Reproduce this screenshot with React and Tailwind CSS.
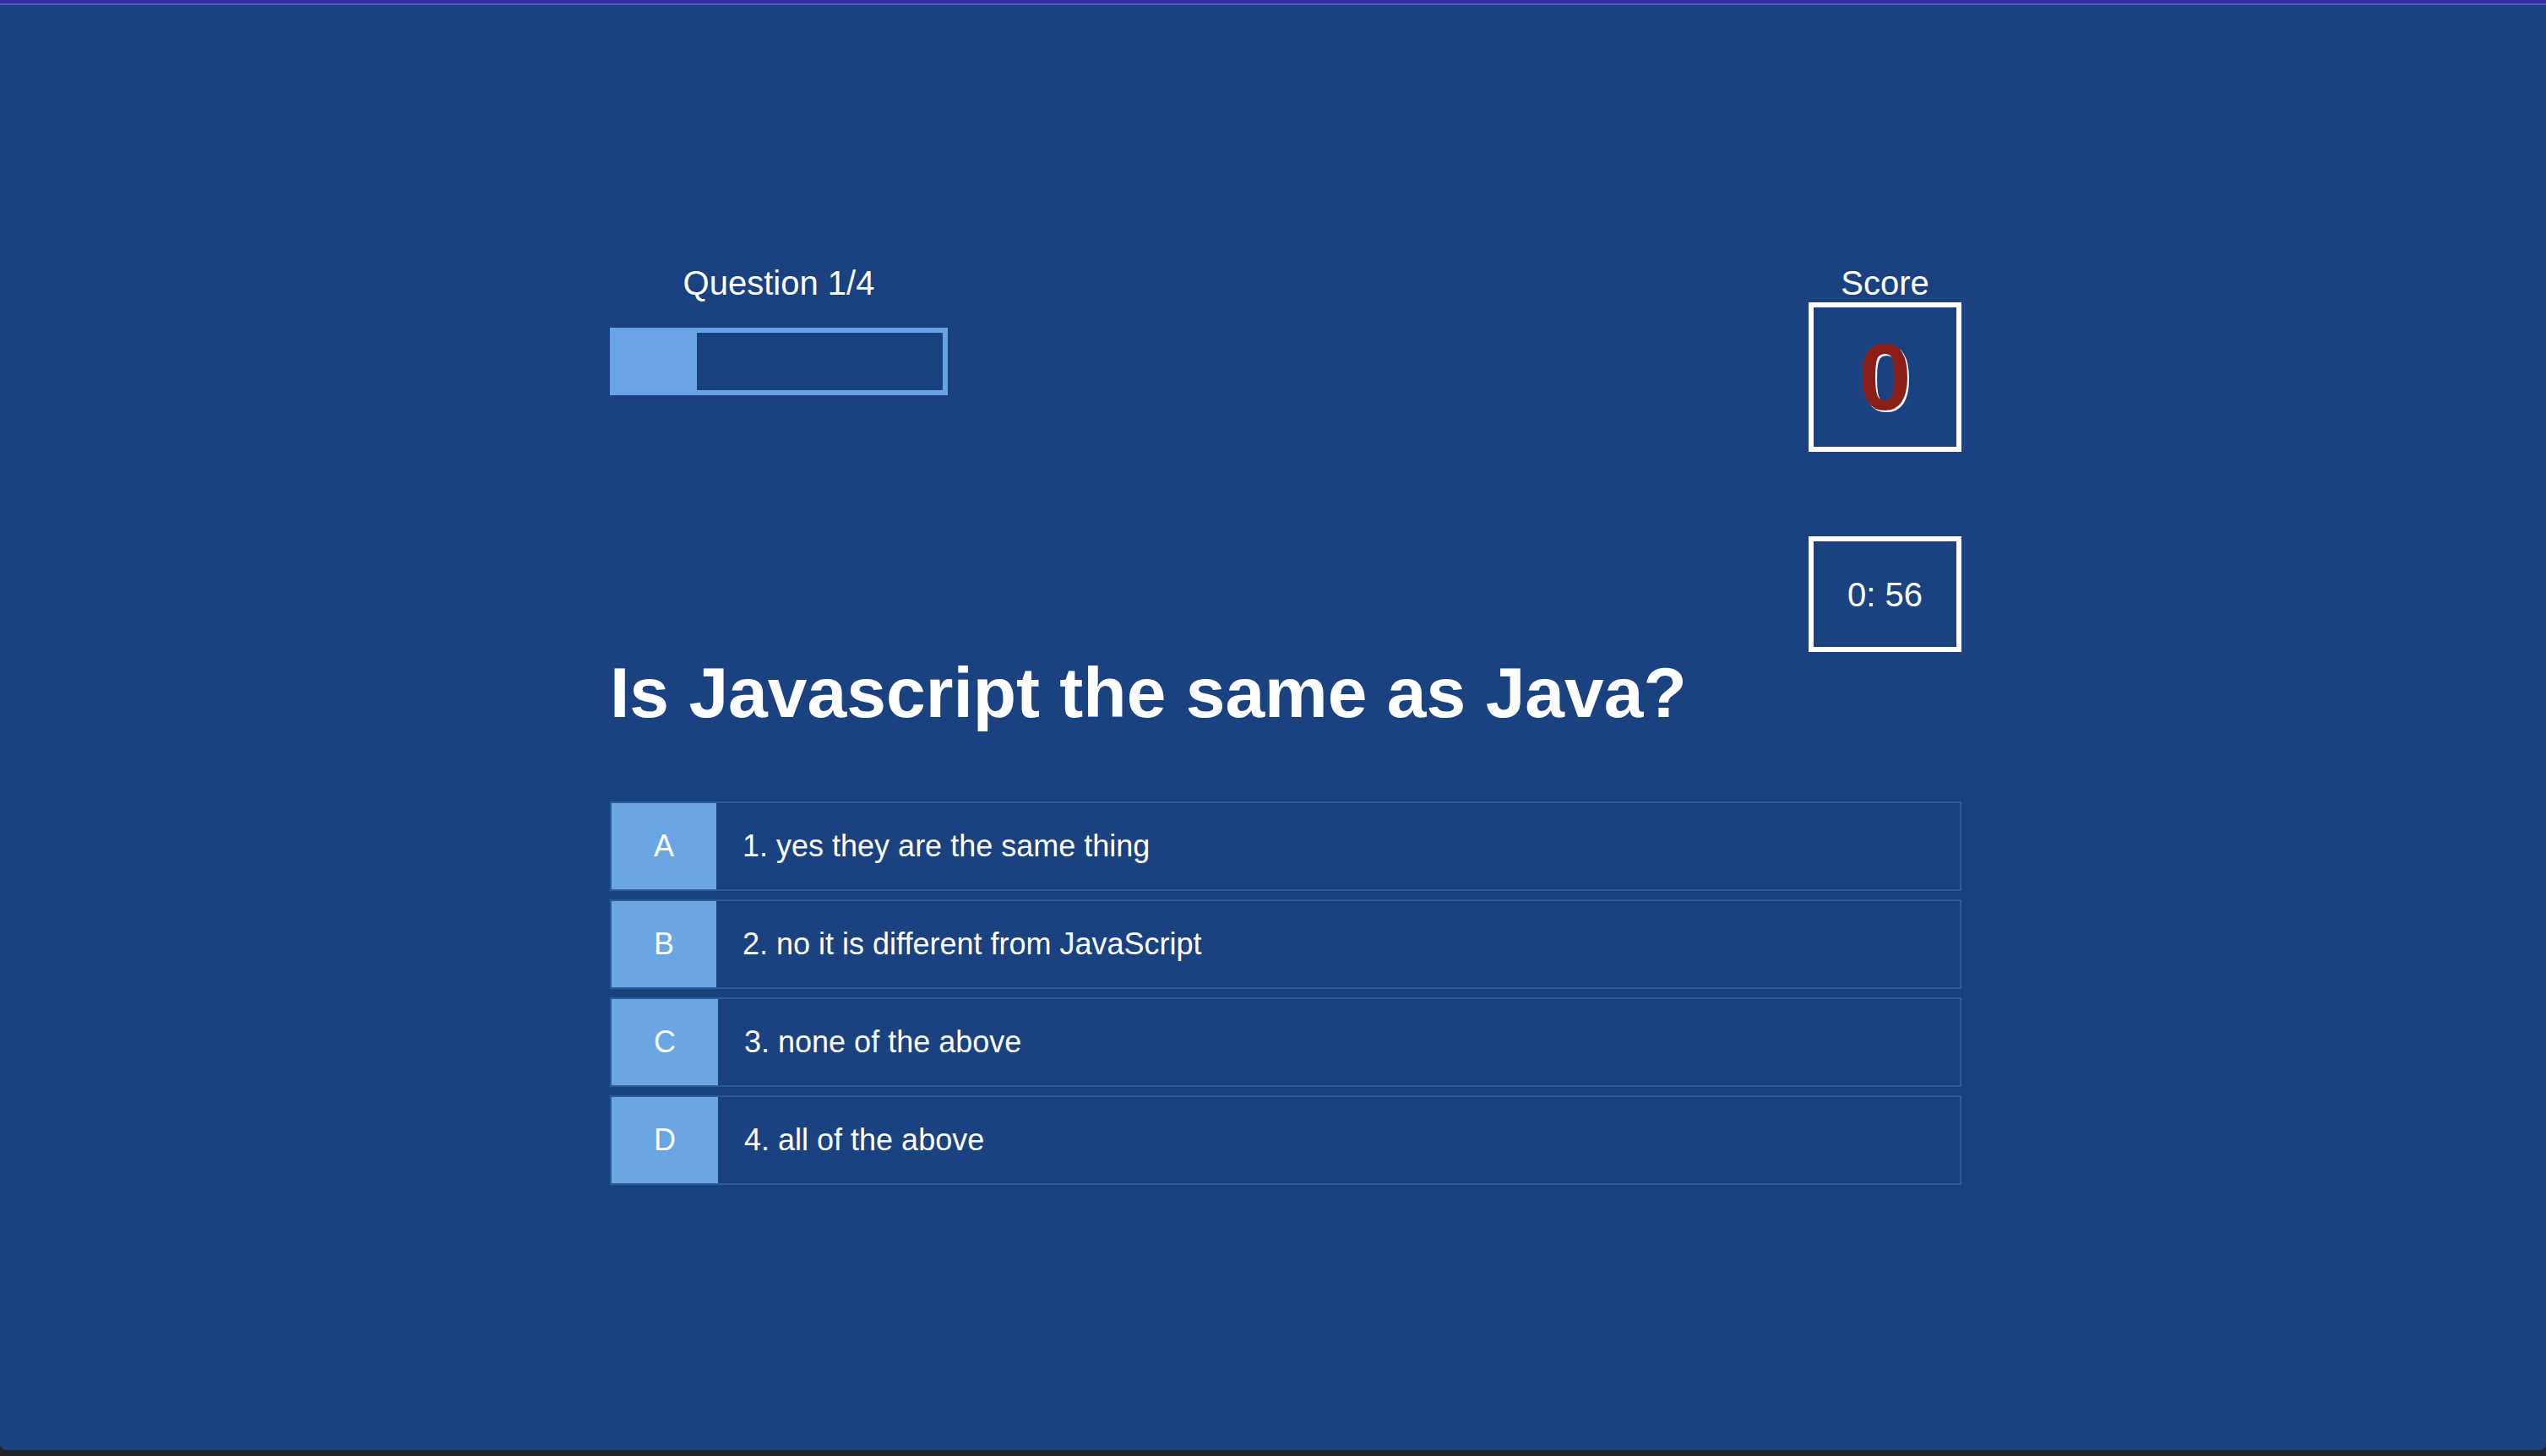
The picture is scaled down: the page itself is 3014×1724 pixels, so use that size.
export default function App() {
  const options = [
    { letter: "A", text: "1. yes they are the same thing" },
    { letter: "B", text: "2. no it is different from JavaScript" },
    { letter: "C", text: "3. none of the above" },
    { letter: "D", text: "4. all of the above" },
  ];
  const progress = 25;

  return (
    <div className="h-[1724px] w-full bg-[#22262c] font-['Liberation_Sans',Arial,sans-serif] text-white overflow-hidden">
      <div className="h-[1717px] bg-[#1a4280] rounded-b-[8px] flex flex-col">
        <div className="h-[4px] bg-[#3529a6]" />
        <div className="h-[2px] bg-[#5a5bb8]" />

        <div className="pl-[30px] pt-[306px]">
          <div className="mx-auto w-[1600px]">
            <div className="flex justify-between items-start">
              <div className="w-[400px] flex flex-col items-center">
                <p className="text-[40px] leading-[46px]">Question 1/4</p>
                <div className="mt-[30px] w-full h-[80px] border-[6px] border-[#68a4e4]">
                  <div className="h-full bg-[#68a4e4]" style={{ width: `${progress}%` }} />
                </div>
              </div>

              <div className="w-[181px] flex flex-col items-center">
                <p className="text-[40px] leading-[46px]">Score</p>
                <div className="w-full h-[177px] border-[6px] border-white flex items-center justify-center">
                  <span className="text-[112px] font-bold leading-none text-[#8b1e17] [text-shadow:2px_2px_0_#ffffff]">0</span>
                </div>
                <div className="mt-[100px] w-full h-[137px] border-[6px] border-white flex items-center justify-center">
                  <span className="text-[40px] leading-none">0: 56</span>
                </div>
              </div>
            </div>

            <h1 className="text-[84px] font-bold leading-[97px]">Is Javascript the same as Java?</h1>

            <div className="mt-[80px] flex flex-col gap-[10px]">
              {options.map((o) => (
                <div key={o.letter} className="h-[106px] border-2 border-[#2d5c9e] flex items-stretch">
                  <div className="bg-[#6aa5e4] px-[50px] flex items-center text-[36px]">{o.letter}</div>
                  <div className="pl-[31px] flex items-center text-[36px]">{o.text}</div>
                </div>
              ))}
            </div>
          </div>
        </div>
      </div>
    </div>
  );
}
